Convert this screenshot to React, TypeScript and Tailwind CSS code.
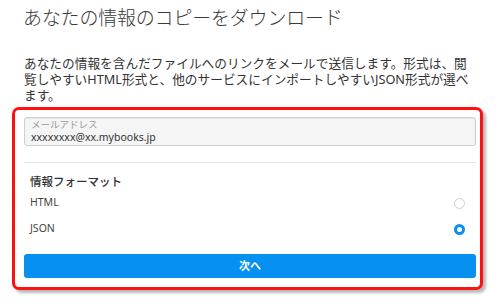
import React from 'react';

const formats = [
  { id: 'html', label: 'HTML', checked: false },
  { id: 'json', label: 'JSON', checked: true },
];

const Radio: React.FC<{ checked: boolean }> = ({ checked }) =>
  checked ? (
    <span className="block w-[11px] h-[11px] rounded-full border-[3px] border-[#0a8ff0] bg-white" />
  ) : (
    <span className="block w-[11px] h-[11px] rounded-full border border-[#cfcfcf] bg-white" />
  );

export default function App() {
  return (
    <div className="w-[500px] h-[304px] bg-white overflow-hidden font-['Noto_Sans','Noto_Sans_CJK_JP',sans-serif] text-[#333]">
      {/* Heading */}
      <h1 className="pl-[23px] pt-[5px] text-[19px] leading-[26px] font-light text-[#3a3a3a] tracking-[-0.2px]">
        あなたの情報のコピーをダウンロード
      </h1>

      {/* Description */}
      <p className="pl-[24px] pr-[20px] mt-[24px] text-[12.7px] leading-[16px] text-[#333]">
        あなたの情報を含んだファイルへのリンクをメールで送信します。形式は、閲
        <br />
        覧しやすいHTML形式と、他のサービスにインポートしやすいJSON形式が選べ
        <br />
        ます。
      </p>

      {/* Highlighted card */}
      <div className="ml-[12px] mt-[4px] w-[471px] h-[183px] rounded-[7px] border-[3px] border-[#ff1010] bg-white shadow-[3px_3px_3px_rgba(0,0,0,0.28)] pl-[9px] pr-[4px] pt-[7px]">
        {/* Email field */}
        <div className="h-[29px] rounded-[3px] border border-[#cfcfcf] bg-[#f5f5f5] shadow-[inset_0_1px_1px_rgba(0,0,0,0.06)] pl-[6px] flex flex-col justify-center">
          <span className="text-[9.5px] leading-[12px] text-[#9a9a9a]">メールアドレス</span>
          <span className="text-[10.5px] leading-[13px] text-[#333]">xxxxxxxx@xx.mybooks.jp</span>
        </div>

        <div className="mt-[16px] h-px bg-[#e3e3e3]" />

        {/* Format selector */}
        <div className="mt-[11px] h-[16px] pl-[6px] flex items-center text-[11.5px] font-medium text-[#333]">
          情報フォーマット
        </div>
        {formats.map(f => (
          <div key={f.id} className="h-[26px] pl-[6px] pr-[11px] flex items-center justify-between text-[10.5px] text-[#444]">
            <span>{f.label}</span>
            <Radio checked={f.checked} />
          </div>
        ))}

        <button className="mt-[12px] w-full h-[24px] rounded-[3px] bg-[#0690f0] text-white text-[11px] font-bold flex items-center justify-center">
          次へ
        </button>
      </div>
    </div>
  );
}
